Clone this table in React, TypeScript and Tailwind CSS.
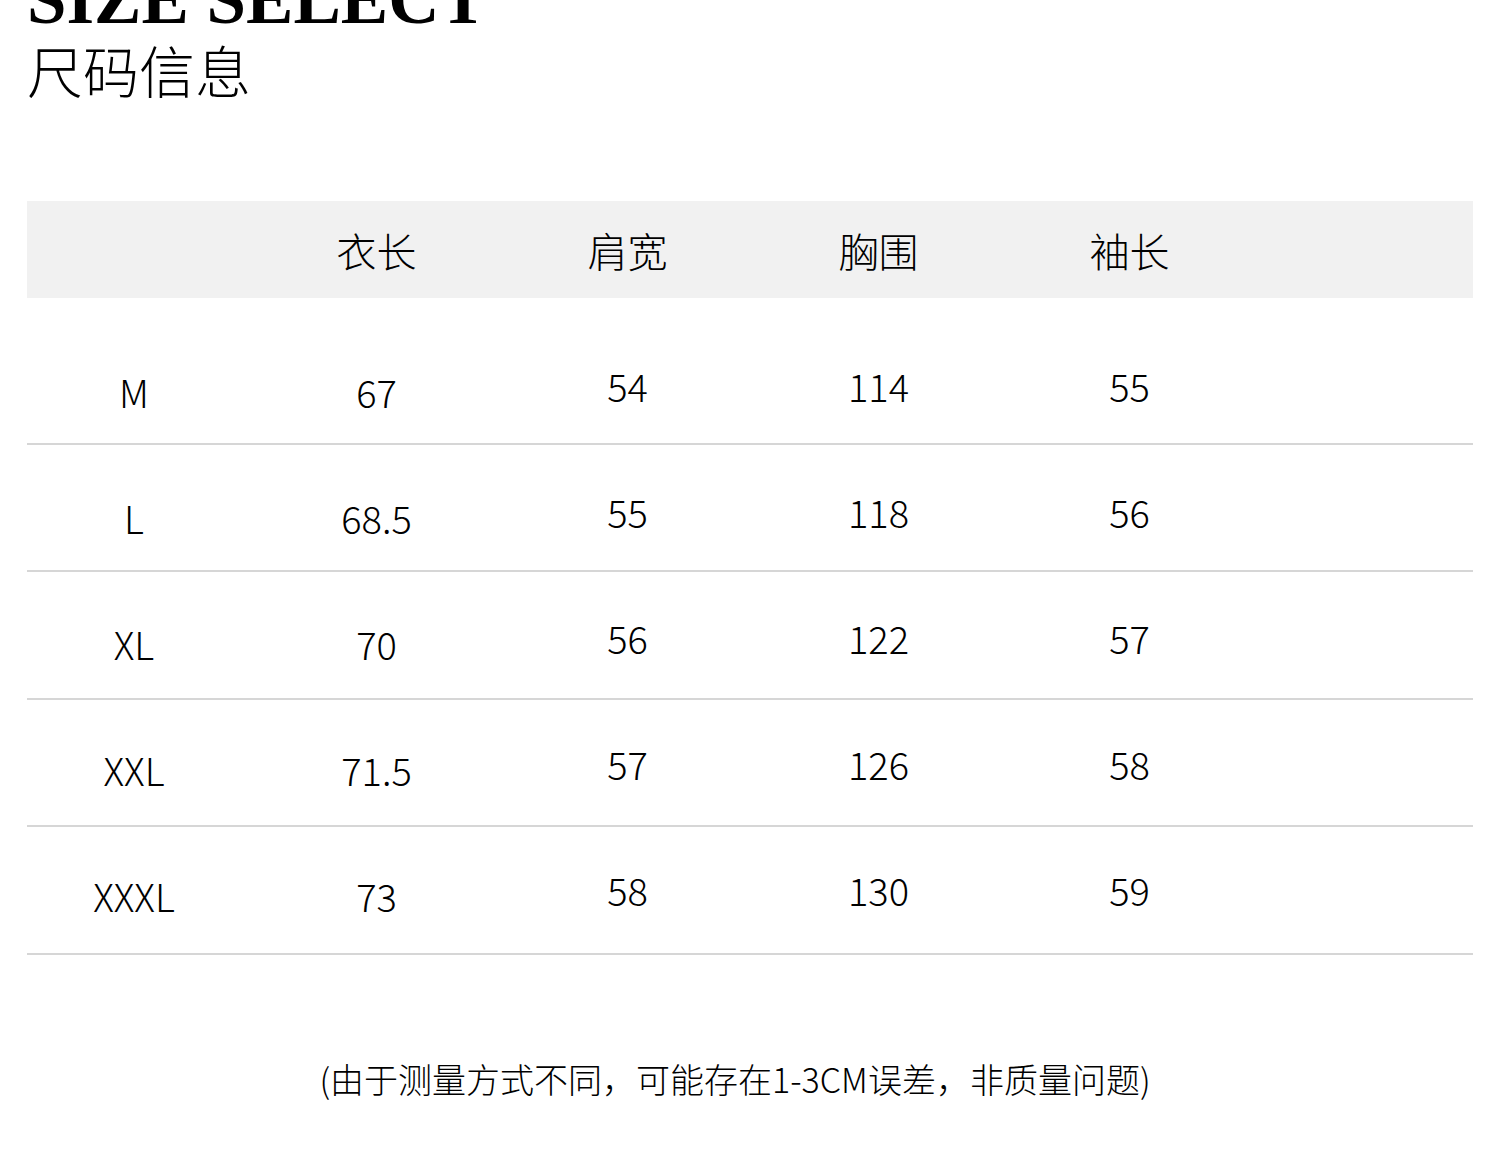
const cjk = "font-['Noto_Sans_CJK_SC',sans-serif]";

// text in the rows sits a little higher on each row down, so padding grows per row
const rows = [
  { size: "M", length: "67", shoulder: "54", chest: "114", sleeve: "55", low: "pb-[32px]", high: "pb-[38px]" },
  { size: "L", length: "68.5", shoulder: "55", chest: "118", sleeve: "56", low: "pb-[33.5px]", high: "pb-[39.5px]" },
  { size: "XL", length: "70", shoulder: "56", chest: "122", sleeve: "57", low: "pb-[35px]", high: "pb-[41px]" },
  { size: "XXL", length: "71.5", shoulder: "57", chest: "126", sleeve: "58", low: "pb-[36.5px]", high: "pb-[42.5px]" },
  { size: "XXXL", length: "73", shoulder: "58", chest: "130", sleeve: "59", low: "pb-[38px]", high: "pb-[44px]" },
];

const headers = ["衣长", "肩宽", "胸围", "袖长"];

export default function App() {
  return (
    <div className={`h-[1164px] w-full overflow-hidden bg-white font-light text-black ${cjk}`}>
      {/* title */}
      <div className="px-[27px]">
        <div className="-mt-[29px] font-['Liberation_Serif',serif] text-[71px] font-bold leading-[57px]">
          SIZE SELECT
        </div>
        <div className="mt-[13px] text-[56px] leading-none">尺码信息</div>
      </div>

      {/* table */}
      <div className="mx-[27px] mt-[104px]">
        <div className="grid h-[97px] grid-cols-[224px_251px_251px_251px_251px_1fr] items-center bg-[#f1f1f1] text-[40px] leading-none">
          <div />
          {headers.map((h) => (
            <div key={h} className="text-center">
              {h}
            </div>
          ))}
          <div />
        </div>

        <div className="pt-[19px]">
          {rows.map((r) => (
            <div
              key={r.size}
              className="grid h-[127.5px] grid-cols-[224px_251px_251px_251px_251px_1fr] items-end border-b-2 border-[#d6d6d6] text-[38px] leading-none"
            >
              <div className={`${r.low} pr-[10px] text-center`}>{r.size}</div>
              <div className={`${r.low} text-center`}>{r.length}</div>
              <div className={`${r.high} text-center`}>{r.shoulder}</div>
              <div className={`${r.high} text-center`}>{r.chest}</div>
              <div className={`${r.high} text-center`}>{r.sleeve}</div>
              <div />
            </div>
          ))}
        </div>
      </div>

      {/* note */}
      <div className="mt-[107px] pr-[30px] text-center text-[34px] leading-none">
        (由于测量方式不同，可能存在1-3CM误差，非质量问题)
      </div>
    </div>
  );
}
